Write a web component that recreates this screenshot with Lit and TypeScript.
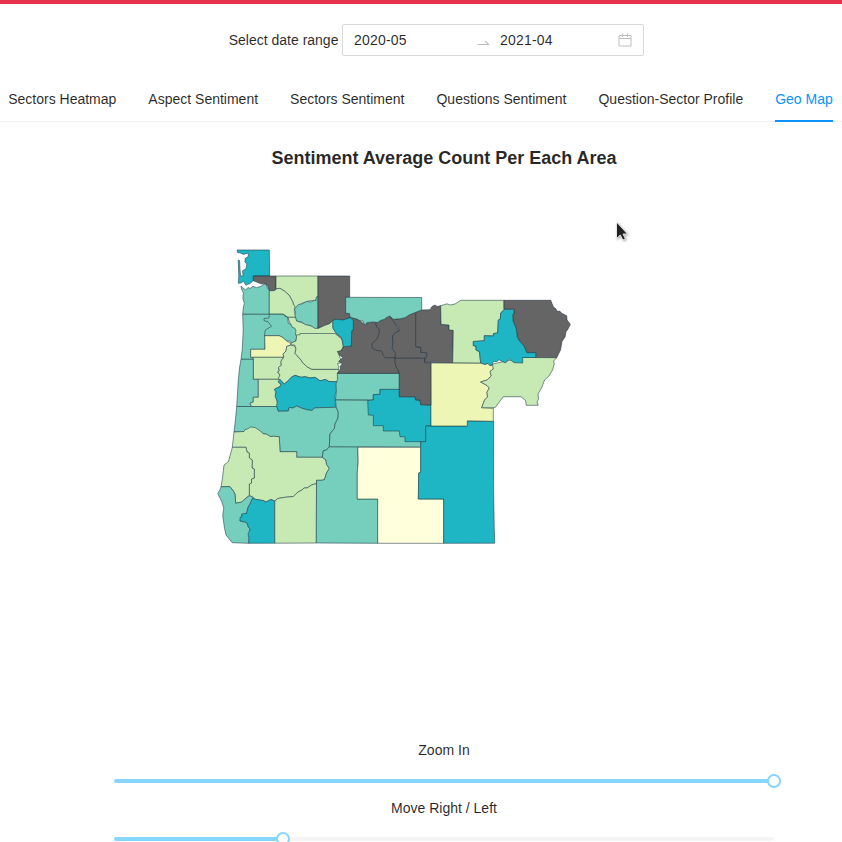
import { LitElement, html, svg, css } from "lit";
import { customElement, state } from "lit/decorators.js";

type Area = [tone: string, points: string];

const AREAS: Area[] = [
  ["blue", "237,250 269.3,250 269.6,276 253.3,276 253.3,280.7 249.7,283.7 247.5,284.3 246,285.3 243.3,281.3 241,283 238.3,283.3 238.8,276 238.2,260 239.6,260.7 240,269.3 240.6,275.7 243,276.3 242.6,270.8 246,268.7 246.8,264 244.8,262 245.3,258.3 248.3,256.5 248.2,253 243.3,254.4 240,252.7 237.7,252.7"],
  ["grey", "253.3,276 276,276 276,289.3 274.3,290.7 269.3,290.7 267.5,285.5 263.5,283.3 261.7,284 256.7,282 253.3,280.7"],
  ["teal", "241,286 242.5,287.5 245.7,290 248,287.5 250,288.5 253,286.3 256.7,287.7 261.7,286 263,284.5 265.7,283.7 267.5,288 269.3,290.7 269.3,314.3 242.7,314.3 243.3,308 244.3,303.3 242.8,298 243.5,293.3 241.5,289"],
  ["green", "276,276 318,276 318,296 315,300.7 310,300.7 301.7,303.3 295,309 292.7,301.7 289,295 284.3,291 280,288.3 276,289"],
  ["green", "269.3,290.7 274.3,290.7 277,288.7 280,288.3 284.3,291 289,295 292.7,301.7 293.3,304 295,306.7 294.3,311.7 296,317.3 287.7,317.3 283.3,314.3 269.3,314.3"],
  ["green", "287.7,317.3 296,317.3 296.7,321 318,328.3 330,323.3 333,320 333,328 336.7,334 341.7,338.3 342,346 300,346 292,328"],
  ["teal", "318,296 318,328 315,328.5 311,325.7 305,324.5 302,322 296.7,321 295,315.5 295.7,312 294.3,309.3 298.3,304.5 302.3,303.8 306.7,301.3 311,302 314,300.3 316,300.5 316.3,297"],
  ["teal", "242.7,314.3 283.3,314.3 287.7,317.3 287.7,325 265,335 265,349.3 250.7,349.3 250.7,357.3 253.3,357.3 253.3,359.3 241,359.3 242.3,349 243.2,330"],
  ["teal", "269.3,314.3 283.3,314.3 285,316.3 287.7,317.3 288.3,323.3 291,324.3 292.3,327.3 295,328.3 296,331 295.3,334 296.7,336.7 296,341 291.5,343.5 290,341 286.7,341 282,337 279,335.7 264.5,335.7 265.3,330 271.5,326.3 268,321.7 264,320.7 264,318.5 269,318"],
  ["yellow", "264.7,335.7 279,335.7 282,337 286.7,341 291,343.5 291,345 286.7,346.5 286,351 283,354 284,357.3 250.7,357.3 250.7,349.3 265,349.3"],
  ["green", "253.3,357.3 283,357.3 281,362 281.3,365.5 278.5,368 279.3,371 277.7,372.5 280,375 278.5,379.3 253.3,379.3"],
  ["teal", "241,359.3 253.3,359.3 253.3,379.3 258.3,379.3 258.3,397.3 253.3,397.3 253.3,402 250,403.3 251.7,406.5 236.7,406.5 238.3,380 239.5,368"],
  ["green", "258.3,379.3 278.5,379.3 280,384 284.3,384 275,389 276,398 278.3,406.5 251.7,406.5 250,403.3 253.3,402 253.3,397.3 258.3,397.3"],
  ["green", "291,345 294.7,346 296,349 295,353.3 301,360 303,363 306.7,366.5 311.7,369.3 339,369.3 338,381.8 329,381.5 325.5,379.5 320,380.8 315,377.3 310,378 305,376.7 301,377.3 295,375.3 291,377.5 288.3,380.7 284.3,384 278.3,378.3 280,375 277.7,371.7 279.3,371 278.5,367 281.3,365.5 281,361 284,357 283,354 286,351 286.7,346.5"],
  ["green", "296.7,334.8 300,334.8 300,333.5 335,333.5 341.7,339 343.3,346.7 339,355 342,363 337.7,363.3 339,369.3 311.7,369.3 306.7,366.5 303,363 301,360 295,353.3 296,349 294.7,345 291,345 291,343 296,341"],
  ["blue", "280,379.3 283,383 284.3,384 288.3,380.7 291,377.5 295,375.3 301,377.3 305,376.7 310,378 315,377.3 320,380.8 325.5,379.5 329,381.5 338,381.8 336.5,386 337,391 335,395 335.5,407.3 315,407.8 312,410.5 307,409.8 302,408.3 296.7,406 293,408 289.3,407.3 288.3,411 278.3,411.3 276.5,406 277.5,401 275,396 276.3,392 274.3,389.3 280,386.7 281,384 278,382"],
  ["teal", "236.7,406.5 276.5,406.5 278.3,411.3 288.3,411 289.3,407.3 293,408 296.7,406 302,408.3 307,409.8 312,410.5 315,407.8 335.5,407.3 336.3,407.3 338.3,412 338,418 335,424 334.5,428.3 330,434 329.3,446.7 326.5,450 323.3,450.7 322.3,457.3 296.7,457.3 296.7,451.7 280,451.7 279.3,436.7 274,436.3 270,436.5 267,434.3 263,433.7 260,430.7 234,432 235.5,419"],
  ["green", "234,432 244,431.5 245,429.5 248.3,428.8 250,427 255,427.5 260,430.7 263,433.7 267,434.3 270,436.5 274,436.3 279.3,436.7 280,451.7 296.7,451.7 296.7,457.3 322.3,457.3 326,460 326.5,464.5 329.3,468.3 326.5,473 324.5,479.5 322,480.3 316.5,480.3 316.5,483.5 311.5,485 307,488 304,488 302,490 298,492 293.3,496.5 285,497.3 278,498.5 274.8,501 271,499.5 266,502 263.3,500.5 256,499.5 253.3,498.3 249.3,495 249.3,484 251.5,483 251.5,479 254.3,478 254.3,469 252,468 252.3,460 249.3,458 249.3,453 247,452 246,447.3 232.3,447.3"],
  ["green", "232.3,447.3 246,447.3 247,452 249.3,453 249.3,458 252.3,460 252,468 254.3,469 254.3,478 251.5,479 251.5,483 249.3,484 249.3,495.3 246,498 241.7,502 235.7,503.3 235,494 233,490.5 230,486.7 221,486.7 222.5,478 224,465 228.5,461.5"],
  ["teal", "221,486.7 230,486.7 233,490.5 235,494 235.7,503.3 241.7,502 246,498 249.3,495.8 253.3,497 250,504 248,507.5 246.7,513.3 241.7,515 240,521 246.7,522.7 250,529 248.7,543.3 232.3,542.7 226,535 224.5,528 223.3,520 222.7,515 223.8,508 221.5,501 217.7,493.5 220,490"],
  ["blue", "252.7,498 256,499.5 263.3,500.5 266,502 271,499.5 274.8,501 274.8,543.2 248.7,543.3 249,538 248,534 250.3,529 248,527 247.5,523.5 244.5,521.5 240,521 240,517.5 242,516.7 241.7,514 246.7,513.3 248,507.5 250,504"],
  ["green", "274.8,501 278,498.5 285,497.3 293.3,496.5 298,492 302,490 304,488 307,488 311.5,485 316.5,483.5 316.3,543 274.8,543.2"],
  ["teal", "329.3,446.7 357.8,446.7 358.2,462 357.3,472 357.3,499 377.7,499 377.7,543.3 316.3,543 316.5,480.3 322,480.3 324.5,479.5 326.5,473 329.3,468.3 326.5,464.5 326,460 322.3,457.3 323.3,450.7 326.5,450"],
  ["teal", "337.3,373.3 399.3,373.3 399.3,390 380,389.5 380,394.5 373.3,394.7 373.3,400 335.5,400 336.3,391 336,384 337.5,379"],
  ["teal", "335.5,400 368,400.3 420.7,434 420.7,447.2 329.3,446.7 330,434 334.5,428.3 335,424 338,418 338.3,412 336.3,407.3"],
  ["blue", "380,389.3 399.3,389.3 399.3,396.7 415,396.7 415.7,400 420,400 420.7,404.7 431,405 431,426 425.7,426 425.7,441.7 405,441.7 405,436.7 400,436.7 399.3,431 383.3,431 383.3,425.7 373.3,425.7 373.3,415.3 368.3,415 367.7,400.5 373.3,400 373.3,394.7 380,394.2"],
  ["cream", "357.8,447.3 420.7,447.3 420.7,472.3 418.7,473 418.3,499 443.7,499 443.7,543.3 377.7,543.3 377.7,499 357.3,499 357.3,472 358.2,462"],
  ["blue", "425.7,426 467.3,426 467.3,420.8 478,421.3 493.7,421.3 493.5,480 494.2,526 494.7,543.2 443.7,543.3 443.7,499 418.3,499 418.7,473 420.7,472.3 420.7,441.7 425.7,441.7"],
  ["yellow", "430.7,363 480.7,363 485,364.3 488,363.3 490,365.7 493.3,365 493.3,369 490,371.5 491.3,376 487,380 480.7,382 487,385.5 489.3,388 487,392 487.5,397 484.5,400 481.7,407.7 493.3,408.3 493.3,421.3 467.3,420.8 467.3,426 431,426"],
  ["grey", "318,276 349.7,276 349.7,297.3 345.7,297.3 345.7,313.3 349.5,313.5 350,317.7 346,319.5 343,320 336,319.3 333.3,320 330,323.3 325,324.8 318,328.3"],
  ["grey", "350,317 357,319 360,320.7 365,325 366.7,322.7 380,321 389.3,316.5 395,323.3 399.3,331 393.3,335 392.3,348.3 395.7,353.3 395,358.3 396,366.7 399.3,370 399.3,373.3 337.3,373.3 340.7,369 340,366.5 342.5,363.5 338.6,361.5 343,357.3 339.3,355.3 337.3,351.5 341.5,350.5 343.3,346.7 351,346.3 351.7,330.7 353.3,330 353.3,320"],
  ["grey", "389.3,316 393.3,319.3 400,318.7 405,317.7 409,315 415.7,312.3 415.7,346.7 420.7,347.3 420.7,352.3 426.7,352.7 426.3,357.5 425,358.3 395,358.3 395.7,353.3 392.3,348.3 393,341 392.3,337 393.3,335 396,332 399.5,331 398,327.5 395,323.3"],
  ["none", "379,321 375.7,322.7 376.5,327 379.3,329 379,334 377,339 372,343.3 372,348 377,350.5 381.7,351 383,355 385,357.7 395,357.7"],
  ["grey", "395,358.3 425,358.3 425,362.7 431,362.7 431,405 420.7,404.7 420,400 415.7,400 415,396.7 399.3,396.7 399.3,373.3 398.3,370.5 396,366.7 395,363"],
  ["grey", "415.7,312.3 421.7,310 430,309.7 432,306.5 435,305 437,306.5 441,305.7 441,324.3 449,325 449,330 453.3,330.3 452.7,362.7 425,362.3 425,358.3 426.7,357.5 426.7,352.7 420.7,352.3 420.7,347.3 415.7,346.7"],
  ["teal", "345.7,297.3 421.7,297.5 421.7,310 415.7,312.3 409,315 405,317.7 400,318.7 393.3,319.3 390,316 387,317 384,319.5 380,320.5 378,322.5 373,322 366.7,322.7 366,325 364,324 363,321 360,320.7 357,319 350,317.3 349.5,313.5 345.7,313.3"],
  ["blue", "333.3,320 336,319.3 343,320 350,317.7 353.3,320.3 353.3,330 351.7,330.7 351.3,346 343.3,346.7 342.5,340 340.5,336.5 336.7,334 333,328.3 332.7,323.5"],
  ["green", "440.7,305.7 447,303.8 450,305 455,304 460.7,300.3 504,300.3 504,309.5 500.7,313 500.3,319 498.3,320 497.7,333 493.5,333.5 493.3,336 484.3,335.7 484.3,341 473.3,341.7 473.3,345.7 476,346 476,350 479.3,351.7 480.7,363 452.7,362.7 453.3,330.3 449,330 449,325 441,324.3"],
  ["grey", "504,300.3 550.7,300.3 553.3,306.7 556,309 557,311.3 560,311.3 562,313.5 566.7,315.7 567,320 570.3,324.3 568,329 566,331.7 565,337 562,341.5 560.5,350 556.7,357.7 535.7,357.5 535.7,352.7 526.7,352.7 524,346 519.5,341 517.3,337.5 516.3,329 513,321 512.7,314.5 514,313.5 514,309.3 504,309.3"],
  ["green", "556.7,357.7 553.7,361 554.3,364 552.5,370 549,376 544.5,380 542,387 538,394 538.5,399 537,402 538.3,405.3 526.3,405.3 525.5,400.5 521,396.7 503.3,396.7 495,407.7 481.7,407.7 484.5,400 487.5,397 487,392 489.3,388 487,385.5 480.7,382 487,380 491.3,376 490,371.5 493.3,369 492.5,364 522.7,357.5"],
  ["blue", "504.5,309.5 514,309.3 514,313.5 512.7,314.5 513,321 516.3,329 517.3,337.5 519.5,341 524,346 526.7,352.7 535.7,352.7 535.7,357.5 522.7,357.5 522.7,363 514,362.7 509,358.7 505.5,363 499,359.7 497,361.5 493.3,361.7 492,364.5 490,365.7 488,363.3 485,364.5 480.7,363 479.5,351.7 476,350 476,346 473.3,345.7 473.3,341.3 484.3,340.7 484.3,335.7 493.3,336 493.5,333.5 497.7,333 498.3,320 500.3,319 500.7,313"],
];

const TABS = [
  "Sectors Heatmap",
  "Aspect Sentiment",
  "Sectors Sentiment",
  "Questions Sentiment",
  "Question-Sector Profile",
  "Geo Map",
];

@customElement("range-slider")
class RangeSlider extends LitElement {
  static properties = { label: {}, value: { type: Number } };
  declare label: string;
  declare value: number;

  static styles = css`
    :host { display: block; height: 58px; }
    .label { height: 22px; line-height: 22px; text-align: center; }
    .rail { height: 4px; margin: 18px 0 0; border-radius: 2px; background: #f5f5f5; }
    .track {
      height: 4px; border-radius: 2px; background: #87d7fb;
      display: flex; align-items: center; justify-content: flex-end;
    }
    .handle {
      flex: none; box-sizing: border-box; width: 14px; height: 14px;
      margin-right: -7px; border: 2px solid #87d7fb; border-radius: 50%; background: #fff;
    }
  `;

  render() {
    return html`
      <div class="label">${this.label}</div>
      <div class="rail">
        <div class="track" style="width:${this.value}%"><span class="handle"></span></div>
      </div>`;
  }
}

@customElement("app-root")
class AppRoot extends LitElement {
  @state() active = 5;

  static styles = css`
    :host {
      display: flex; flex-direction: column; box-sizing: border-box;
      height: 842px; overflow: hidden; border-top: 4px solid #e6324b; background: #fff;
      font: 14px/22px "Liberation Sans", Arial, sans-serif; color: rgba(0, 0, 0, 0.85);
    }
    .dates { display: flex; align-items: center; gap: 4px; margin: 20px 0 0 228.7px; height: 32px; flex: none; }
    .caption { width: 109.3px; white-space: nowrap; }
    .picker {
      display: flex; align-items: center; box-sizing: border-box; width: 302px; height: 32px;
      padding: 0 11px; border: 1px solid #d9d9d9; border-radius: 2px; letter-spacing: 0.2px;
    }
    .from { width: 122px; }
    .to { width: 118px; margin-left: 9px; }
    .swap { width: 15px; height: 14px; flex: none; }
    .calendar { width: 14px; height: 14px; flex: none; }
    .tabs {
      display: flex; gap: 32px; height: 66px; flex: none; box-sizing: border-box;
      padding: 20px 0 0 8.2px; border-bottom: 1px solid #f0f0f0;
    }
    .tab { height: 46px; box-sizing: border-box; padding-top: 12px; white-space: nowrap; }
    .active { color: #0a93fc; border-bottom: 2px solid #0a93fc; }
    .title { margin: 25px 0 0; padding-left: 46px; font-size: 18px; line-height: 22px; text-align: center; flex: none; }
    .map { display: block; width: 842px; height: 570px; flex: none; }
    .area { stroke: #1e3c46; stroke-opacity: 0.7; stroke-width: 0.8; stroke-linejoin: round; }
    .blue { fill: #1eb6c4; }
    .teal { fill: #76cebc; }
    .green { fill: #c7e9b4; }
    .yellow { fill: #eef6b5; }
    .cream { fill: #ffffdb; }
    .grey { fill: #656565; stroke: #1f2f40; }
    .none { fill: none; stroke: #1f2f40; }
    .sliders { width: 660px; margin-left: 114px; flex: none; }
    .pointer { position: absolute; left: 612px; top: 216px; width: 20px; height: 28px; filter: drop-shadow(1px 1px 1px rgba(0, 0, 0, 0.35)); }
  `;

  render() {
    return html`
      <div class="dates">
        <span class="caption">Select date range</span>
        <div class="picker">
          <span class="from">2020-05</span>
          <svg class="swap" viewBox="0 0 15 14"><path d="M1.5 11.5H12.6L9 7.8" fill="none" stroke="#bfbfbf" stroke-width="1.1" /></svg>
          <span class="to">2021-04</span>
          <svg class="calendar" viewBox="0 0 14 14" fill="none" stroke="#bfbfbf">
            <path d="M1 2.5H13V13H1ZM1 5.5H13M4.5 .5V4M9.5 .5V4" />
          </svg>
        </div>
      </div>
      <nav class="tabs">
        ${TABS.map((name, i) => html`<span class="tab ${i === this.active ? "active" : ""}" @click=${() => (this.active = i)}>${name}</span>`)}
      </nav>
      <h2 class="title">Sentiment Average Count Per Each Area</h2>
      <svg class="map" viewBox="0 169 842 570">
        ${AREAS.map(([tone, points]) =>
          tone === "none"
            ? svg`<polyline class="area none" points=${points} />`
            : svg`<polygon class="area ${tone}" points=${points} />`)}
      </svg>
      <div class="sliders">
        <range-slider label="Zoom In" .value=${100}></range-slider>
        <range-slider label="Move Right / Left" .value=${25.6}></range-slider>
      </div>
      <svg class="pointer" viewBox="612 218 20 28">
        <path d="M616.5 224V240.5L620.3 237L622.8 242L625.4 240.8L623 236H627.5Z" fill="#222" stroke="#fff" stroke-width="0.8" />
      </svg>`;
  }
}
